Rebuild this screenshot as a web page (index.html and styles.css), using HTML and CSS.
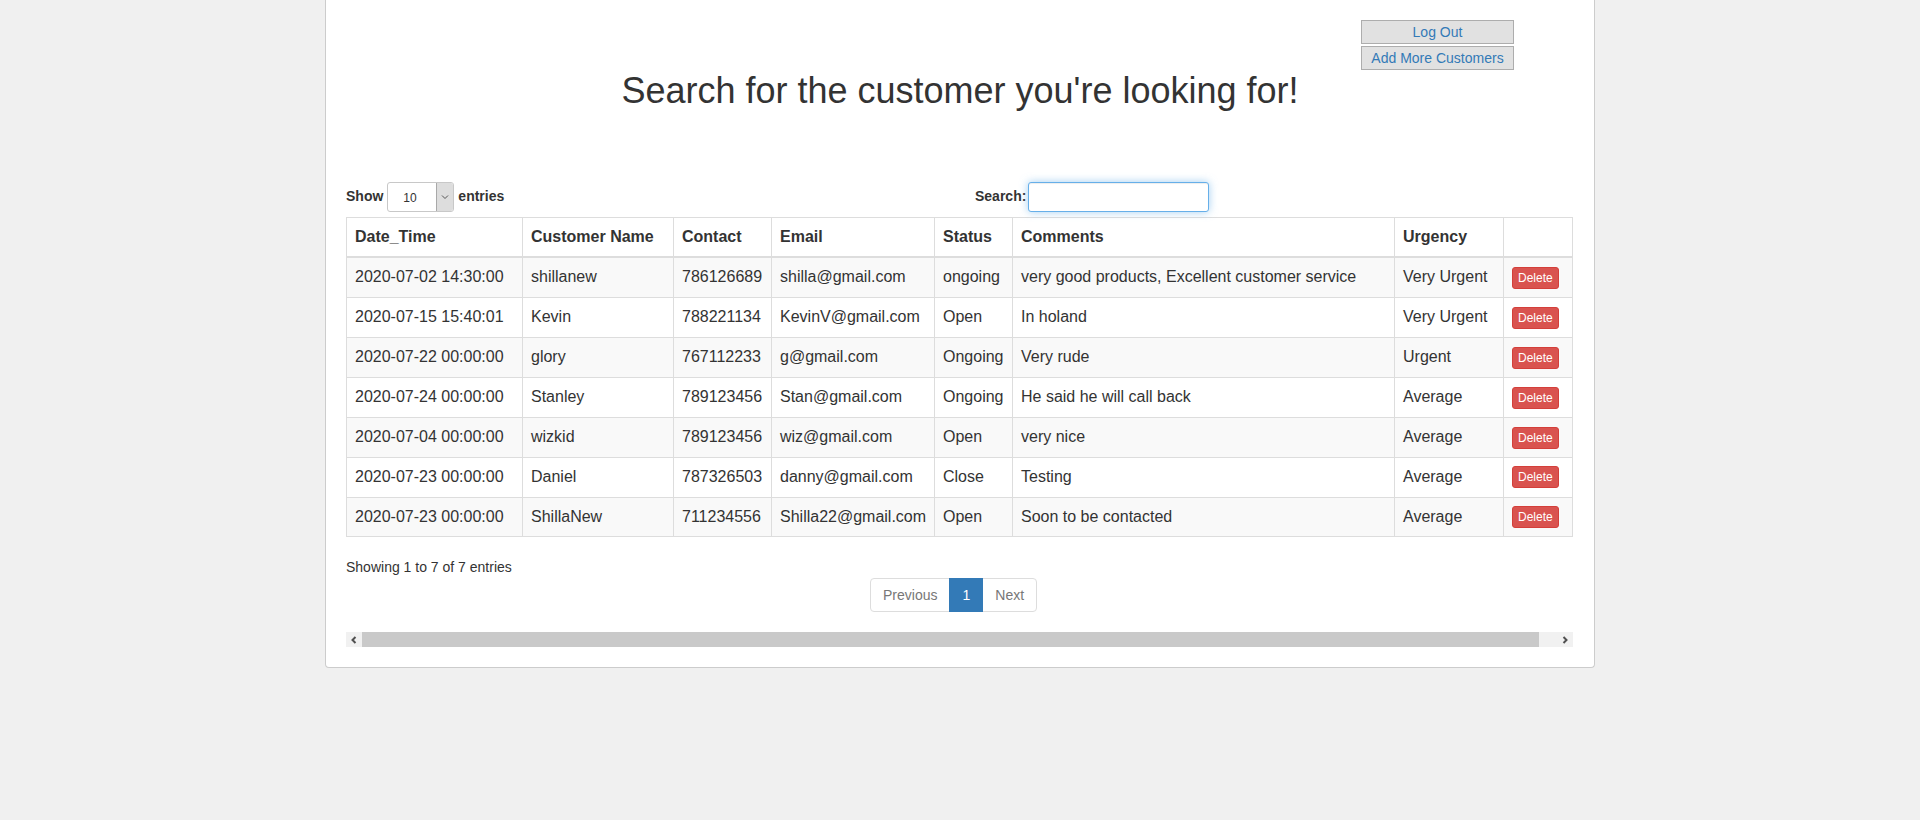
FILE: index.html
```html
<!DOCTYPE html>
<html lang="en">
<head>
<meta charset="utf-8">
<title>Customers</title>
<link rel="stylesheet" href="styles.css">
</head>
<body>
<div class="card">
  <div class="actions">
    <button class="act-btn" type="button">Log Out</button>
    <button class="act-btn" type="button">Add More Customers</button>
  </div>
  <h1 class="title">Search for the customer you're looking for!</h1>

  <div class="wrapper">
    <div class="controls">
      <div class="ctl-col">
        <span class="lbl">Show</span>
        <span class="select"><span class="select-val">10</span><span class="select-arrow"><svg width="8" height="6" viewBox="0 0 8 6"><path d="M1 1.5 L4 4.5 L7 1.5" fill="none" stroke="#555" stroke-width="1"/></svg></span></span>
        <span class="lbl">entries</span>
      </div>
      <div class="ctl-col">
        <span class="lbl">Search:</span>
        <span class="search"></span>
      </div>
    </div>

    <table class="grid">
      <colgroup>
        <col style="width:176px">
        <col style="width:151px">
        <col style="width:98px">
        <col style="width:163px">
        <col style="width:78px">
        <col style="width:382px">
        <col style="width:109px">
        <col>
      </colgroup>
      <thead>
        <tr><th>Date_Time</th><th>Customer Name</th><th>Contact</th><th>Email</th><th>Status</th><th>Comments</th><th>Urgency</th><th></th></tr>
      </thead>
      <tbody>
        <tr><td>2020-07-02 14:30:00</td><td>shillanew</td><td>786126689</td><td>shilla@gmail.com</td><td>ongoing</td><td>very good products, Excellent customer service</td><td>Very Urgent</td><td><span class="del">Delete</span></td></tr>
        <tr><td>2020-07-15 15:40:01</td><td>Kevin</td><td>788221134</td><td>KevinV@gmail.com</td><td>Open</td><td>In holand</td><td>Very Urgent</td><td><span class="del">Delete</span></td></tr>
        <tr><td>2020-07-22 00:00:00</td><td>glory</td><td>767112233</td><td>g@gmail.com</td><td>Ongoing</td><td>Very rude</td><td>Urgent</td><td><span class="del">Delete</span></td></tr>
        <tr><td>2020-07-24 00:00:00</td><td>Stanley</td><td>789123456</td><td>Stan@gmail.com</td><td>Ongoing</td><td>He said he will call back</td><td>Average</td><td><span class="del">Delete</span></td></tr>
        <tr><td>2020-07-04 00:00:00</td><td>wizkid</td><td>789123456</td><td>wiz@gmail.com</td><td>Open</td><td>very nice</td><td>Average</td><td><span class="del">Delete</span></td></tr>
        <tr><td>2020-07-23 00:00:00</td><td>Daniel</td><td>787326503</td><td>danny@gmail.com</td><td>Close</td><td>Testing</td><td>Average</td><td><span class="del">Delete</span></td></tr>
        <tr><td>2020-07-23 00:00:00</td><td>ShillaNew</td><td>711234556</td><td>Shilla22@gmail.com</td><td>Open</td><td>Soon to be contacted</td><td>Average</td><td><span class="del">Delete</span></td></tr>
      </tbody>
    </table>

    <div class="info">Showing 1 to 7 of 7 entries</div>
    <ul class="pager">
      <li class="pg disabled">Previous</li>
      <li class="pg active">1</li>
      <li class="pg disabled">Next</li>
    </ul>

    <div class="hscroll">
      <span class="sb-btn"><svg width="8" height="8" viewBox="0 0 8 8"><path d="M5.5 1 L2.5 4 L5.5 7" fill="none" stroke="#505050" stroke-width="2"/></svg></span>
      <span class="sb-thumb"></span>
      <span class="sb-track"></span>
      <span class="sb-btn"><svg width="8" height="8" viewBox="0 0 8 8"><path d="M2.5 1 L5.5 4 L2.5 7" fill="none" stroke="#505050" stroke-width="2"/></svg></span>
    </div>
  </div>
</div>
</body>
</html>
```
FILE: styles.css
```css
html, body {
  margin: 0;
  padding: 0;
}
body {
  background: #f0f0f0;
  font-family: "Liberation Sans", Arial, Helvetica, sans-serif;
  color: #333;
  font-size: 14px;
  line-height: 1.42857;
}
.card {
  box-sizing: border-box;
  width: 1270px;
  margin: 0 auto;
  background: #fff;
  border: 1px solid #cccccc;
  border-top: 0;
  border-radius: 0 0 4px 4px;
  padding: 20px 20px 20px 20px;
}
.actions {
  display: flex;
  flex-direction: column;
  align-items: flex-end;
  gap: 2px;
  padding-right: 60px;
}
.act-btn {
  box-sizing: border-box;
  width: 153px;
  height: 24px;
  margin: 0;
  padding: 0 6px;
  background: #e1e1e1;
  border: 1px solid #adadad;
  border-radius: 0;
  color: #337ab7;
  font-family: "Liberation Sans", Arial, sans-serif;
  font-size: 14px;
  line-height: 20px;
  text-align: center;
}
.title {
  margin: 1px 0 71px 0;
  font-size: 36px;
  font-weight: 500;
  line-height: 1.1;
  text-align: center;
  color: #333;
}
.controls {
  display: grid;
  grid-template-columns: 1fr 1fr;
  height: 30px;
}
.ctl-col {
  display: flex;
  align-items: center;
}
.ctl-col + .ctl-col {
  padding-left: 629px;
  margin-left: -614px;
}
.lbl {
  font-weight: bold;
  font-size: 14px;
}
.select {
  box-sizing: border-box;
  display: inline-flex;
  width: 67px;
  height: 30px;
  margin: 0 4px 0 4px;
  border: 1px solid #c8c8c8;
  border-radius: 3px;
  overflow: hidden;
  background: #fff;
}
.select-val {
  flex: 1;
  padding-left: 15px;
  font-size: 12px;
  line-height: 30px;
}
.select-arrow {
  width: 16px;
  background: #dddddd;
  border-left: 1px solid #a9a9a9;
  display: flex;
  align-items: center;
  justify-content: center;
}
.search {
  box-sizing: border-box;
  display: inline-block;
  width: 181px;
  height: 30px;
  margin-left: 2px;
  border: 1px solid #66afe9;
  border-radius: 3px;
  background: #fff;
  box-shadow: inset 0 1px 1px rgba(0,0,0,.075), 0 0 8px rgba(102,175,233,.6);
}
.grid {
  width: 1227px;
  margin-top: 5px;
  border-collapse: collapse;
  table-layout: fixed;
  font-size: 16px;
  line-height: 1.42857;
  border: 1px solid #ddd;
}
.grid th, .grid td {
  padding: 8px;
  border: 1px solid #ddd;
  text-align: left;
  vertical-align: top;
  white-space: nowrap;
}
.grid th {
  font-weight: bold;
  border-bottom: 2px solid #ddd;
  vertical-align: bottom;
}
.grid tbody tr:nth-child(odd) td {
  background: #f9f9f9;
}
.del {
  display: inline-block;
  padding: 1px 5px;
  font-size: 12px;
  line-height: 1.5;
  color: #fff;
  background: #d9534f;
  border: 1px solid #d43f3a;
  border-radius: 3px;
  vertical-align: middle;
}
.info {
  margin-top: 20px;
  font-size: 14px;
  line-height: 20px;
}
.pager {
  display: flex;
  list-style: none;
  margin: 1px 0 0 524px;
  padding: 0;
}
.pg {
  padding: 6px 12px;
  font-size: 14px;
  line-height: 20px;
  border: 1px solid #ddd;
  margin-left: -1px;
  background: #fff;
  color: #337ab7;
}
.pg:first-child {
  margin-left: 0;
  border-radius: 4px 0 0 4px;
}
.pg:last-child {
  border-radius: 0 4px 4px 0;
}
.pg.disabled {
  color: #777;
}
.pg.active {
  background: #337ab7;
  border-color: #337ab7;
  color: #fff;
  position: relative;
}
.hscroll {
  display: flex;
  height: 15px;
  width: 1227px;
  margin-top: 20px;
  background: #f1f1f1;
}
.sb-btn {
  width: 16px;
  display: flex;
  align-items: center;
  justify-content: center;
}
.sb-thumb {
  width: 1177px;
  background: #c9c9c9;
}
.sb-track {
  flex: 1;
}
```
